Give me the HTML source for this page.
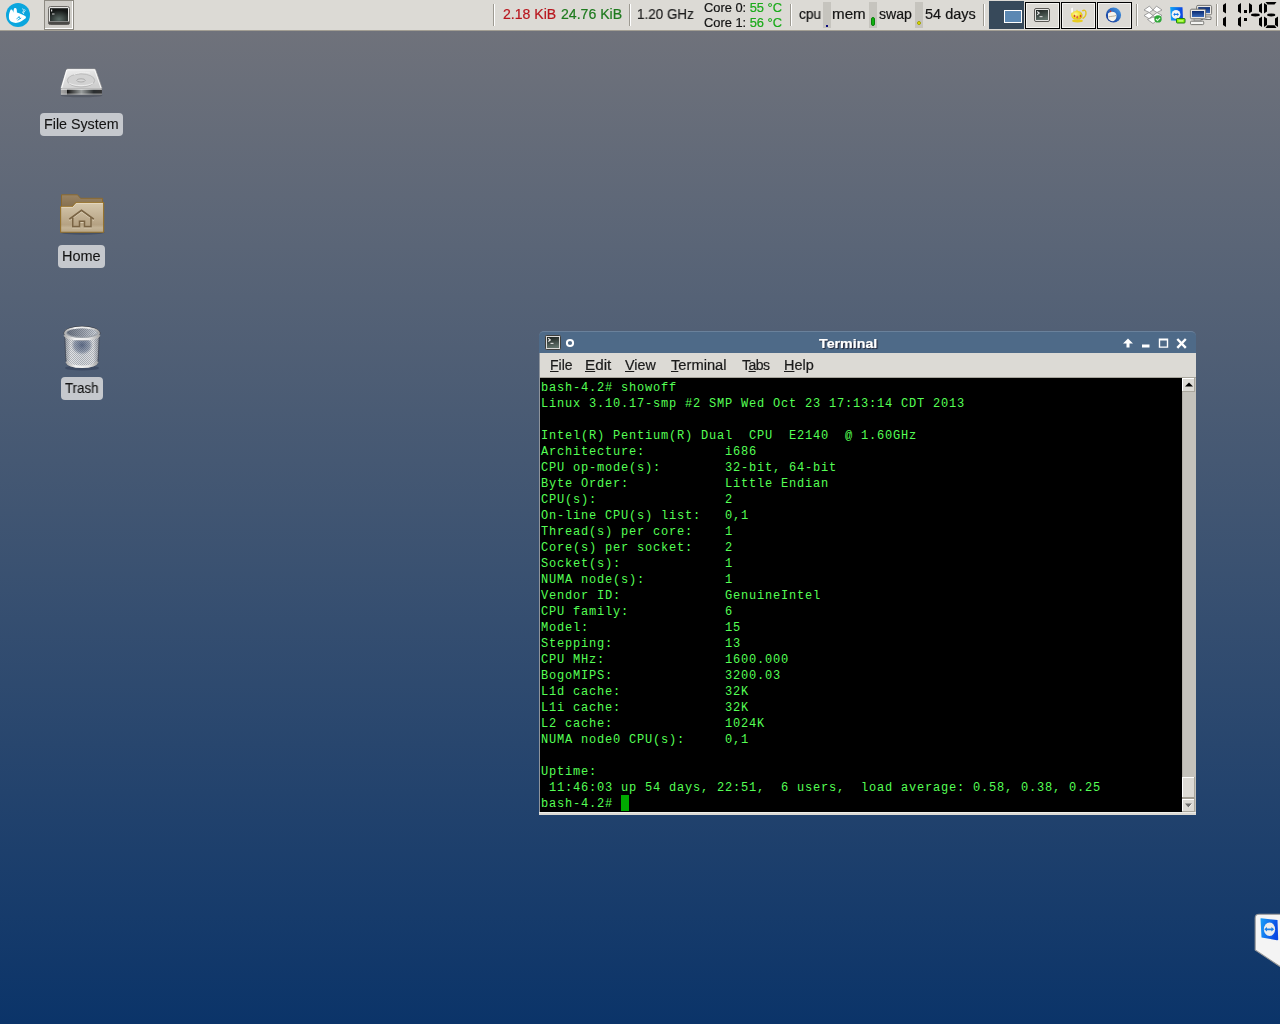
<!DOCTYPE html>
<html><head><meta charset="utf-8">
<style>
*{margin:0;padding:0;box-sizing:border-box}
html,body{width:1280px;height:1024px;overflow:hidden}
body{position:relative;font-family:"Liberation Sans",sans-serif;background:linear-gradient(to bottom,#6f727b 0px,#6f727b 31px,#405572 512px,#0b3469 1024px)}
.a{position:absolute}
svg{position:absolute;overflow:visible}
#panel{position:absolute;left:0;top:0;width:1280px;height:31px;background:#dcdad5;border-bottom:1px solid #a29e93}
.sep{position:absolute;top:4px;width:2px;height:22px;border-left:1px solid #9d9a92;border-right:1px solid #fff}
.pt{position:absolute;font-size:14px;white-space:nowrap;line-height:15px;top:7px;transform-origin:0 0}
.lbl{position:absolute;background:#c5c8cd;border-radius:4px;font-size:14px;color:#141414;line-height:23px;height:23px;white-space:nowrap}
.lbl span{position:absolute;top:0;transform-origin:0 0;-webkit-text-stroke:0.1px currentColor}
.bar{position:absolute;top:2px;width:8px;height:26px;background:#c6c4be}
.task{position:absolute;top:2px;width:35px;height:27px;border:1px solid #000;background:#dcdad5;box-shadow:inset 1px 1px 0 #f4f3f0,inset -1px -1px 0 #f4f3f0}
#term{position:absolute;left:539px;top:331px;width:657px;height:484px}
#tb{position:absolute;left:0;top:0;width:657px;height:22px;background:#4e6a88;border-radius:5px 5px 0 0;border-top:1px solid #6a819b}
#mb{position:absolute;left:1px;top:22px;width:656px;height:25px;background:#dcdad5;border-bottom:1px solid #a9a69d}
.mi{position:absolute;top:5px;font-size:14px;line-height:15px;color:#1a1a1a;white-space:nowrap;transform-origin:0 0}
.mi u{text-decoration:underline;text-decoration-thickness:1px;text-underline-offset:1px}
#scr{position:absolute;left:1px;top:47px;width:643px;height:434px;background:#000;font-family:"Liberation Mono",monospace;font-size:12px;letter-spacing:0.8px;line-height:16px;color:#55ff55;white-space:pre;padding:2px 0 0 1px}
.tx{will-change:transform;-webkit-text-stroke:0.2px currentColor}
</style></head><body>
<div id="panel">
 <!-- xfce logo -->
 <svg style="left:6px;top:3px" width="24" height="24" viewBox="0 0 24 24">
  <circle cx="12" cy="12" r="12" fill="#0aa6de"/>
  <path d="M2.9,13.3 C2.9,11.5 3.4,10 3.9,8.6 C4.2,6.9 4.8,6.3 5.5,6.4 C6.3,6.5 6.8,7.5 7.1,8.6 L7.4,9.8 C7.5,8 7.7,6 8.3,5.3 C9,4.7 10.2,4.8 10.6,6 C10.9,7 10.9,8.3 10.9,9.5 C14,10.5 17.5,12 19.5,13.2 C20.2,14 20,15 19.3,15.6 C17,17.5 14.5,19 12.2,19.6 C10.5,20 9,20 7.5,19.6 C5.5,19 4,18 3.3,16.5 C2.9,15.5 2.9,14.5 2.9,13.3 Z" fill="#fff"/>
  <path d="M10.5,15.8 l3.2,-2.2 M11.6,17.3 l3.6,-2.4 M12.6,13.6 l1.8,2.4" stroke="#0aa6de" stroke-width="1" fill="none" opacity="0.85"/>
  <path d="M16.6,5.5 l1.1,2 l-1,2 l1.2,1.4 M18.3,6.6 l1.3,0.8 M17.4,9.5 l1.6,-1.2" stroke="#fff" stroke-width="1" fill="none" opacity="0.8"/>
 </svg>
 <!-- launcher -->
 <div class="a" style="left:44px;top:0;width:30px;height:30px;border:1px solid #8d8a82;background:#cfcdc8;box-shadow:inset -1px -1px 0 #fff"></div>
 <svg style="left:48px;top:6px" width="22" height="19" viewBox="0 0 22 19">
  <defs><radialGradient id="tg" cx="0.5" cy="0.85" r="0.7"><stop offset="0" stop-color="#5b6b66"/><stop offset="1" stop-color="#151817"/></radialGradient></defs>
  <rect x="0.5" y="0.5" width="21" height="18" rx="2" fill="#e6e6e4" stroke="#6e6c68"/>
  <rect x="0.5" y="15.5" width="21" height="3" rx="1" fill="#4a4946"/>
  <rect x="2" y="2.2" width="18" height="13" fill="url(#tg)"/>
  <rect x="3" y="3.5" width="1.2" height="2" fill="#ddd"/>
  <rect x="4" y="7.5" width="2.5" height="1" fill="#ccc"/>
 </svg>
 <div class="sep" style="left:493px"></div>
 <div class="pt tx" style="left:502.7px;color:#b8161e;transform:scaleX(1.004)">2.18 KiB</div>
 <div class="pt tx" style="left:560.6px;color:#1e7a1e;transform:scaleX(1.007)">24.76 KiB</div>
 <div class="sep" style="left:629px"></div>
 <div class="pt tx" style="left:637.4px;color:#1e1e1e;transform:scaleX(0.959)">1.20 GHz</div>
 <div class="pt tx" style="left:704.3px;top:1px;font-size:12px;color:#141414;transform:scaleX(1.07)">Core 0: <span style="color:#1aaa1a">55 °C</span></div>
 <div class="pt tx" style="left:704.3px;top:16px;font-size:12px;color:#141414;transform:scaleX(1.07)">Core 1: <span style="color:#1aaa1a">56 °C</span></div>
 <div class="sep" style="left:790px"></div>
 <div class="pt tx" style="left:798.7px;color:#141414;transform:scaleX(0.977)">cpu</div>
 <div class="bar" style="left:823px"></div>
 <div class="a" style="left:826px;top:25px;width:2px;height:2px;background:#0a0a80"></div>
 <div class="pt tx" style="left:832.3px;color:#141414;transform:scaleX(1.083)">mem</div>
 <div class="bar" style="left:869px"></div>
 <div class="a" style="left:871px;top:17px;width:4px;height:9px;background:#10b010;border-radius:2px;border:1px solid #0a800a"></div>
 <div class="pt tx" style="left:879.2px;color:#141414;transform:scaleX(1.009)">swap</div>
 <div class="bar" style="left:915px"></div>
 <div class="a" style="left:917px;top:21px;width:4px;height:4px;background:#e8e800;border-radius:2px;border:1px solid #a0a000"></div>
 <div class="pt tx" style="left:924.6px;color:#141414;transform:scaleX(1.035)">54 days</div>
 <div class="sep" style="left:983px"></div>
 <!-- workspace -->
 <div class="a" style="left:989px;top:1px;width:35px;height:28px;background:#37495a"></div>
 <div class="a" style="left:1004px;top:10px;width:18px;height:13px;background:#5b88b3;border:1px solid #fff"></div>
 <!-- tasks -->
 <div class="task" style="left:1025px"></div>
 <div class="task" style="left:1061px"></div>
 <div class="task" style="left:1097px"></div>
 <svg style="left:1034px;top:8px" width="16" height="14" viewBox="0 0 16 14">
  <defs><linearGradient id="tsg" x1="0" y1="0" x2="0.3" y2="1"><stop offset="0" stop-color="#1c2220"/><stop offset="1" stop-color="#5d6d66"/></linearGradient></defs>
  <rect x="0.5" y="0.5" width="15" height="13" rx="1.5" fill="#e4e4e2" stroke="#5a5854"/>
  <rect x="2" y="2" width="12" height="10" fill="url(#tsg)"/>
  <path d="M3.2,3.5 l2,1.6 l-2,1.6" stroke="#e8e8e8" stroke-width="1.1" fill="none"/>
  <rect x="5.5" y="8" width="3" height="1.2" fill="#d0d0d0"/>
 </svg>
 <svg style="left:1070px;top:7px" width="17" height="16" viewBox="0 0 17 16">
  <defs><radialGradient id="tpg" cx="0.4" cy="0.4" r="0.7"><stop offset="0" stop-color="#fff6a0"/><stop offset="0.6" stop-color="#f0dc20"/><stop offset="1" stop-color="#d4b010"/></radialGradient></defs>
  <path d="M12.2,4 C14.5,2.5 16,3.5 16,6 C16,8.5 14.5,10.5 12.5,11.5" stroke="#e2c420" stroke-width="1.4" fill="none"/>
  <path d="M1,7 C1.5,5 4,4.2 7,3.8 C10,4.2 12,5 12.5,7.5 C12.8,10 11.5,12 9.5,12.5 L4.5,12.5 C2.5,12 0.8,9.5 1,7 Z" fill="url(#tpg)"/>
  <path d="M6,3.8 L7,2.6 L8,3.8 Z" fill="#f0dc30"/>
  <ellipse cx="7.5" cy="14" rx="5.4" ry="1.4" fill="#e8cc20"/>
  <ellipse cx="4.5" cy="9" rx="0.8" ry="1.3" fill="#d84030"/>
  <path d="M7,8.5 l1.4,1.5 l-1.2,1.8 l-0.8,-1.6 Z" fill="#e05050"/>
  <ellipse cx="10.5" cy="9" rx="0.8" ry="1.3" fill="#d84030"/>
  <path d="M1.8,1 C2.6,2 1.6,3.5 2.2,5.5" stroke="#fff" stroke-width="1.6" fill="none"/>
 </svg>
 <svg style="left:1105px;top:6px" width="17" height="18" viewBox="0 0 17 18">
  <defs><linearGradient id="tbg" x1="1" y1="0" x2="0" y2="1"><stop offset="0" stop-color="#4aa0e8"/><stop offset="1" stop-color="#0a2a90"/></linearGradient></defs>
  <circle cx="8.5" cy="9" r="7.6" fill="url(#tbg)"/>
  <path d="M3,7.5 C5,5.5 8,5.5 10,6.5 C11.5,7.5 11.8,9.5 11.3,11.5 C10.8,13.5 9.5,15 8,15.2 C5.5,15.2 3.5,14 3,12 Z" fill="#f6f3ec"/>
  <path d="M3.5,11 C6,10 9,10.5 11,9.5" stroke="#8a7a60" stroke-width="0.6" fill="none"/>
  <circle cx="5.5" cy="5.4" r="0.8" fill="#c83020"/>
 </svg>
 <div class="sep" style="left:1136px"></div>
 <!-- dropbox -->
 <svg style="left:1143px;top:5px" width="20" height="20" viewBox="0 0 20 20">
  <g fill="#fff" stroke="#8c8c8c" stroke-width="0.8" stroke-linejoin="round">
   <path d="M1,5 L6.4,1.1 L10,5 L6.4,7.5 Z"/>
   <path d="M10,5 L13.5,1.1 L19,5 L14,7.5 Z"/>
   <path d="M1,10.5 L6,7.5 L10,10.5 L6,13.7 Z"/>
   <path d="M10,10.5 L14,7.5 L19,10.5 L14,13.7 Z"/>
   <path d="M4.5,14.5 L10,12 L15,14.5 L10,18.5 Z"/>
  </g>
  <circle cx="15" cy="13.9" r="3.7" fill="#30a83a"/>
  <path d="M13,14 l1.5,1.5 l2.6,-2.6" stroke="#e8f6e8" stroke-width="1.1" fill="none"/>
 </svg>
 <!-- teamviewer -->
 <svg style="left:1170px;top:6px" width="16" height="18" viewBox="0 0 16 18">
  <defs><linearGradient id="tvg" x1="0" y1="0" x2="1" y2="0"><stop offset="0" stop-color="#10a8f8"/><stop offset="1" stop-color="#0a40e0"/></linearGradient></defs>
  <path d="M0.2,1 L12.5,1.3 L13,14.8 L1,14.5 Z" fill="url(#tvg)"/>
  <circle cx="6" cy="8.4" r="4.4" fill="#f4f4f4"/>
  <path d="M3.2,8.4 l1.8,-1.6 v1 h2.2 v-1 l1.8,1.6 l-1.8,1.6 v-1 h-2.2 v1 Z" fill="#1478e8"/>
  <rect x="6.5" y="12.5" width="8.5" height="4.5" rx="0.8" fill="#88f000" stroke="#1c7c1c" stroke-width="1"/>
  <rect x="8.3" y="14.2" width="5" height="1.2" rx="0.5" fill="#c8ff90"/>
 </svg>
 <!-- network -->
 <svg style="left:1190px;top:5px" width="23" height="21" viewBox="0 0 23 21">
  <defs><linearGradient id="nwg" x1="0" y1="0" x2="0" y2="1"><stop offset="0" stop-color="#0a2a70"/><stop offset="1" stop-color="#3a6ab8"/></linearGradient></defs>
  <rect x="6.6" y="0.4" width="15" height="9.4" rx="1.3" fill="#eceae6" stroke="#6a6a66" stroke-width="0.9"/>
  <rect x="8.2" y="2.1" width="11.8" height="6" fill="url(#nwg)"/>
  <path d="M10,12 L21,12 L21,14.5 L10,14.5" fill="#f2f2f0" stroke="#6a6a66" stroke-width="0.9"/>
  <rect x="0.4" y="4.2" width="15.2" height="9.6" rx="1.3" fill="#eceae6" stroke="#6a6a66" stroke-width="0.9"/>
  <rect x="2" y="6" width="12" height="6" fill="url(#nwg)"/>
  <rect x="4" y="14" width="7" height="2" fill="#c8c8c6" stroke="#777" stroke-width="0.5"/>
  <rect x="0.5" y="16.2" width="13.2" height="3.4" rx="1" fill="#f4f4f2" stroke="#6a6a66" stroke-width="0.9"/>
  <path d="M13,15 C15,14 17,13.5 19.5,11.5" stroke="#bbb" stroke-width="0.8" fill="none"/>
 </svg>
 <div class="sep" style="left:1216px"></div>
 <!-- LCD clock -->
 <svg style="left:0;top:0" width="1280" height="31" viewBox="0 0 1280 31">
  <g fill="#000">
   <polygon points="1226,3 1226,13.5 1223,11.5 1223,5"/>
   <polygon points="1226,16.5 1226,27 1223,25 1223,18.5"/>
   <polygon points="1241,3 1241,13.5 1238,11.5 1238,5"/>
   <polygon points="1241,16.5 1241,27 1238,25 1238,18.5"/>
   <rect x="1244" y="10" width="3" height="3"/>
   <rect x="1244" y="18" width="3" height="3"/>
   <polygon points="1249,3 1252,5 1252,11.5 1249,13.5"/>
   <ellipse cx="1255.4" cy="14.95" rx="4.4" ry="1.45"/>
   <polygon points="1262,3 1262,13.5 1259,11.5 1259,5"/>
   <polygon points="1262,16.5 1262,27 1259,25 1259,18.5"/>
   <polygon points="1264,3 1267,5 1267,11.5 1264,13.5"/>
   <polygon points="1264,16.5 1267,18.5 1267,25 1264,27"/>
   <polygon points="1265.5,2 1276.5,2 1274.5,4.6 1267.5,4.6"/>
   <ellipse cx="1271.2" cy="14.95" rx="4.1" ry="1.45"/>
   <polygon points="1267.5,25.2 1274.5,25.2 1276.5,28 1265.5,28"/>
   <polygon points="1278,16.5 1278,27 1275,25 1275,18.5"/>
  </g>
 </svg>
</div>

<!-- desktop icons -->
<svg style="left:60px;top:68px" width="44" height="30" viewBox="0 0 44 30">
 <defs>
  <linearGradient id="hd1" x1="0" y1="0" x2="0.4" y2="1"><stop offset="0" stop-color="#f0f0f0"/><stop offset="1" stop-color="#cfcfcf"/></linearGradient>
  <linearGradient id="hd2" x1="0" y1="0" x2="1" y2="0"><stop offset="0" stop-color="#a8a8a8"/><stop offset="0.14" stop-color="#909090"/><stop offset="0.15" stop-color="#111"/><stop offset="0.5" stop-color="#9a9e9e"/><stop offset="0.8" stop-color="#2a2e30"/><stop offset="1" stop-color="#333"/></linearGradient>
 </defs>
 <ellipse cx="21.5" cy="27.5" rx="21" ry="1.8" fill="#3a3e48" opacity="0.4"/>
 <path d="M7.5,0.9 L34.5,0.9 Q35.2,0.9 35.5,1.6 L41.9,19.8 Q42.2,21 41,21 L1.8,21 Q0.6,21 0.9,19.8 L6.6,1.6 Q6.9,0.9 7.5,0.9 Z" fill="url(#hd1)" stroke="#9a9a9a" stroke-width="0.7"/>
 <path d="M7.3,1.8 L34.6,1.8 L41,20" stroke="#fafafa" stroke-width="0.9" fill="none"/>
 <path d="M1.6,20 L6.8,2" stroke="#fdfdfd" stroke-width="1.1" fill="none"/>
 <ellipse cx="21" cy="12.4" rx="13.7" ry="6.6" fill="#d2d2d2" stroke="#a8a8a8" stroke-width="0.6"/>
 <path d="M9,15 C14,18.5 28,18.5 33,15" stroke="#f2f2f2" stroke-width="0.8" fill="none"/>
 <path d="M14,6.5 C18,4.5 24,3.5 30,5" stroke="#eeeeee" stroke-width="1" fill="none"/>
 <ellipse cx="21" cy="12.4" rx="4.2" ry="1.6" fill="#d8d8d8" stroke="#8e8e8e" stroke-width="0.6"/>
 <rect x="0.9" y="21" width="41" height="5.6" fill="url(#hd2)"/>
 <rect x="0.9" y="25.6" width="41" height="1" fill="#d0d0d0" opacity="0.7"/>
 <rect x="0.9" y="21" width="41" height="0.8" fill="#f4f4f4" opacity="0.8"/>
</svg>
<div class="lbl" style="left:40px;top:113px;width:83px"><span class="tx" style="left:3.6px;transform:scaleX(1.019)">File System</span></div>

<svg style="left:60px;top:194px" width="45" height="41" viewBox="0 0 45 41">
 <defs>
  <linearGradient id="fd0" x1="0" y1="0" x2="0" y2="1"><stop offset="0" stop-color="#9a8464"/><stop offset="1" stop-color="#75603f"/></linearGradient>
  <linearGradient id="fd1" x1="0" y1="0" x2="0" y2="1"><stop offset="0" stop-color="#d6c8ad"/><stop offset="0.75" stop-color="#b5a283"/><stop offset="0.85" stop-color="#c4b497"/><stop offset="1" stop-color="#b8a687"/></linearGradient>
 </defs>
 <ellipse cx="22.5" cy="38.5" rx="22" ry="2.2" fill="#2a3850" opacity="0.45"/>
 <path d="M1.5,0.8 L17.5,0.8 L20.5,4.3 L42.5,4.3 L42.5,22 L1.5,22 Z" fill="url(#fd0)" stroke="#8a6a30" stroke-width="1"/>
 <path d="M0.6,12.5 L12.5,12.5 L16,8.5 L43.6,8.5 L43.6,38.2 L0.6,38.2 Z" fill="url(#fd1)" stroke="#95712c" stroke-width="1.1" stroke-linejoin="round"/>
 <path d="M1.5,13.3 L12.8,13.3 L16.3,9.4 L42.8,9.4" stroke="#e8dcc4" stroke-width="0.8" fill="none"/>
 <path d="M9.3,25.2 L21.5,16.2 L33.8,25.2" stroke="#e6dac2" stroke-width="1.4" fill="none" transform="translate(0,1)"/>
 <path d="M9.3,25.2 L21.5,16.2 L33.8,25.2" stroke="#7a6444" stroke-width="1.7" fill="none"/>
 <path d="M12.8,23.5 L12.8,32.6 L19.5,32.6 L19.5,27.2 L24.5,27.2 L24.5,32.6 L31,32.6 L31,23.5" stroke="#e6dac2" stroke-width="1.2" fill="none" transform="translate(0,1)"/>
 <path d="M12.8,23.5 L12.8,32.6 L19.5,32.6 L19.5,27.2 L24.5,27.2 L24.5,32.6 L31,32.6 L31,23.5" stroke="#7a6444" stroke-width="1.6" fill="none"/>
</svg>
<div class="lbl" style="left:58px;top:245px;width:47px"><span class="tx" style="left:3.8px;transform:scaleX(1.036)">Home</span></div>

<svg style="left:62px;top:324px" width="40" height="47" viewBox="0 0 40 47">
 <defs>
  <linearGradient id="trb" x1="0" y1="0" x2="1" y2="0"><stop offset="0" stop-color="#9a9ea4"/><stop offset="0.18" stop-color="#e2e3e5"/><stop offset="0.5" stop-color="#d6d9dd"/><stop offset="0.82" stop-color="#e0e1e3"/><stop offset="1" stop-color="#92969e"/></linearGradient>
  <radialGradient id="trc" cx="0.5" cy="0.4" r="0.5"><stop offset="0" stop-color="#4a5a7a" stop-opacity="0.85"/><stop offset="0.7" stop-color="#5a6a88" stop-opacity="0.5"/><stop offset="1" stop-color="#6a7890" stop-opacity="0"/></radialGradient>
  <pattern id="mesh" width="2" height="2" patternUnits="userSpaceOnUse"><rect width="1" height="1" fill="#30384a" opacity="0.28"/><rect x="1" y="1" width="1" height="1" fill="#30384a" opacity="0.28"/></pattern>
  <linearGradient id="tro" x1="0" y1="0" x2="1" y2="0"><stop offset="0" stop-color="#6a7280"/><stop offset="0.6" stop-color="#a4aab4"/><stop offset="1" stop-color="#d4d8de"/></linearGradient>
  <linearGradient id="trr" x1="0" y1="0" x2="1" y2="0"><stop offset="0" stop-color="#b0b0b0"/><stop offset="0.3" stop-color="#f4f4f4"/><stop offset="0.7" stop-color="#e8e8e8"/><stop offset="1" stop-color="#a8a8a8"/></linearGradient>
 </defs>
 <ellipse cx="20" cy="44" rx="17" ry="2.5" fill="#2a3550" opacity="0.45"/>
 <path d="M2.5,10 C3.5,20 3,32 4.5,39.5 C6,45 34,45 35.5,39.5 C37,32 36.5,20 37.5,10 Z" fill="url(#trb)" stroke="#3c4250" stroke-width="0.8"/>
 <rect x="9" y="13" width="22" height="20" fill="url(#trc)"/>
 <path d="M2.5,10 C3.5,20 3,32 4.5,39.5 C6,45 34,45 35.5,39.5 C37,32 36.5,20 37.5,10 Z" fill="url(#mesh)"/>
 <path d="M4.5,37.5 C7,44.5 33,44.5 35.5,37.5" stroke="url(#trr)" stroke-width="2.4" fill="none"/>
 <ellipse cx="20" cy="9.2" rx="18.2" ry="6.9" fill="#9aa0a8" stroke="#33373f" stroke-width="0.9"/>
 <ellipse cx="20" cy="9.2" rx="16.9" ry="5.7" fill="none" stroke="url(#trr)" stroke-width="1.8"/>
 <ellipse cx="20" cy="8.6" rx="15" ry="4.2" fill="url(#tro)"/>
 <ellipse cx="20" cy="8.6" rx="15" ry="4.2" fill="url(#mesh)"/>
 <path d="M2.2,11.2 C6,17.2 34,17.2 37.8,11.2" stroke="url(#trr)" stroke-width="1.8" fill="none"/>
</svg>
<div class="lbl" style="left:61px;top:377px;width:42px"><span class="tx" style="left:3.9px;transform:scaleX(0.949)">Trash</span></div>

<!-- terminal window -->
<div id="term">
 <div id="tb"></div>
 <svg style="left:6px;top:4px" width="16" height="15" viewBox="0 0 16 15">
  <defs><linearGradient id="tig" x1="0" y1="0" x2="0.2" y2="1"><stop offset="0" stop-color="#1a201e"/><stop offset="1" stop-color="#60706a"/></linearGradient></defs>
  <rect x="0.5" y="0.5" width="15" height="14" rx="0.8" fill="#dcdcda" stroke="#3e3e3c"/>
  <rect x="2" y="2" width="12" height="11" fill="url(#tig)"/>
  <path d="M3.3,3.3 l2,1.6 l-2,1.6" stroke="#eeeeee" stroke-width="1.1" fill="none"/>
  <rect x="5.5" y="7.8" width="3" height="1.2" fill="#d8d8d8"/>
 </svg>
 <svg style="left:26px;top:7px" width="10" height="10" viewBox="0 0 10 10"><circle cx="5" cy="5" r="3.1" fill="none" stroke="#fff" stroke-width="2"/></svg>
 <div class="a tx" style="left:280.1px;top:5px;font-size:13px;font-weight:bold;color:#fff;line-height:15px;transform:scaleX(1.095);transform-origin:0 0;text-shadow:1px 1px 1px #223">Terminal</div>
 <svg style="left:584px;top:7px" width="66" height="12" viewBox="0 0 66 12">
  <path d="M0,5.5 L5,0.5 L10,5.5 L6.5,5.5 L6.5,9.5 L3.5,9.5 L3.5,5.5 Z" fill="#fff"/>
  <rect x="19" y="6.5" width="7.5" height="3" fill="#fff"/>
  <path d="M35.8,0.5 H45.2 V9.8 H35.8 Z M37.2,2.5 V8.4 H43.8 V2.5 Z" fill="#fff" fill-rule="evenodd"/>
  <path d="M54.3,1 L62.8,9.8 M62.8,1 L54.3,9.8" stroke="#fff" stroke-width="2.4"/>
 </svg>
 <div id="mb">
  <div class="mi tx" style="left:9.5px;transform:scaleX(0.988)"><u>F</u>ile</div>
  <div class="mi tx" style="left:44.9px;transform:scaleX(1.091)"><u>E</u>dit</div>
  <div class="mi tx" style="left:85.2px;transform:scaleX(1.02)"><u>V</u>iew</div>
  <div class="mi tx" style="left:131.4px;transform:scaleX(1.05)"><u>T</u>erminal</div>
  <div class="mi tx" style="left:201.7px;letter-spacing:-0.55px">T<u>a</u>bs</div>
  <div class="mi tx" style="left:243.7px;transform:scaleX(1.032)"><u>H</u>elp</div>
 </div>
 <div id="scr">bash-4.2# showoff
Linux 3.10.17-smp #2 SMP Wed Oct 23 17:13:14 CDT 2013

Intel(R) Pentium(R) Dual  CPU  E2140  @ 1.60GHz
Architecture:          i686
CPU op-mode(s):        32-bit, 64-bit
Byte Order:            Little Endian
CPU(s):                2
On-line CPU(s) list:   0,1
Thread(s) per core:    1
Core(s) per socket:    2
Socket(s):             1
NUMA node(s):          1
Vendor ID:             GenuineIntel
CPU family:            6
Model:                 15
Stepping:              13
CPU MHz:               1600.000
BogoMIPS:              3200.03
L1d cache:             32K
L1i cache:             32K
L2 cache:              1024K
NUMA node0 CPU(s):     0,1

Uptime:
 11:46:03 up 54 days, 22:51,  6 users,  load average: 0.58, 0.38, 0.25
bash-4.2# </div>
 <div class="a" style="left:82px;top:464px;width:8px;height:16px;background:#00aa00"></div>
 <!-- scrollbar -->
 <div class="a" style="left:643px;top:47px;width:14px;height:434px;background:#c4c2bc;border-left:1px solid #b4b1aa"></div>
 <div class="a" style="left:643px;top:47px;width:13px;height:14px;background:#dcdad5;border-right:1px solid #a9a69d;border-bottom:1px solid #a9a69d;box-shadow:inset 1px 1px 0 #fff"></div>
 <svg style="left:646px;top:51px" width="8" height="5" viewBox="0 0 8 5"><path d="M0,4.5 L4,0.5 L8,4.5 Z" fill="#000"/></svg>
 <div class="a" style="left:643px;top:446px;width:13px;height:22px;background:#dcdad5;border-right:1px solid #a9a69d;border-bottom:2px solid #a29e94;box-shadow:inset 1px 1px 0 #fff"></div>
 <div class="a" style="left:643px;top:468px;width:13px;height:13px;background:#dcdad5;border-right:1px solid #a9a69d;border-bottom:1px solid #a9a69d;box-shadow:inset 1px 1px 0 #fff"></div>
 <svg style="left:646px;top:471.5px" width="8" height="5" viewBox="0 0 8 5"><path d="M0,0.5 L7,0.5 L3.5,4.5 Z" fill="#6e6e6e"/><path d="M7,0.8 L3.8,4.6" stroke="#fff" stroke-width="0.8"/></svg>
 <!-- frame -->
 <div class="a" style="left:0;top:22px;width:1px;height:459px;background:#8e949c"></div>
 <div class="a" style="left:0;top:481px;width:657px;height:3px;background:#dcdad5;border-top:1px solid #eeede9"></div>
</div>

<!-- teamviewer side tab -->
<svg style="left:1254px;top:913px" width="26" height="55" viewBox="0 0 26 55">
 <defs><linearGradient id="tvt" x1="0" y1="0" x2="1" y2="0.3"><stop offset="0" stop-color="#1aa0f8"/><stop offset="1" stop-color="#0a48e4"/></linearGradient></defs>
 <path d="M1.2,5 Q1.2,1.2 5,1.2 L26,1.2 L26,53.5 L1.2,37 Z" fill="#f4f4f4"/>
 <path d="M26,1.2 L5,1.2 Q1.2,1.2 1.2,5 L1.2,37 L26,53.5" fill="none" stroke="#9a9a9a" stroke-width="1.1"/>
 <path d="M6.5,5.8 Q6.2,5.2 7.2,5.3 L23.5,7 L24.2,26.5 Q24,27.6 23,27.2 L7.5,24.5 Z" fill="url(#tvt)"/>
 <ellipse cx="15.5" cy="16.2" rx="5.6" ry="6.8" fill="#ececec"/>
 <path d="M10.2,16.3 l2.8,-2.3 v1.4 h4.4 v-1.4 l2.8,2.3 l-2.8,2.3 v-1.4 h-4.4 v1.4 Z" fill="#1a7ee8"/>
</svg>
</body></html>
